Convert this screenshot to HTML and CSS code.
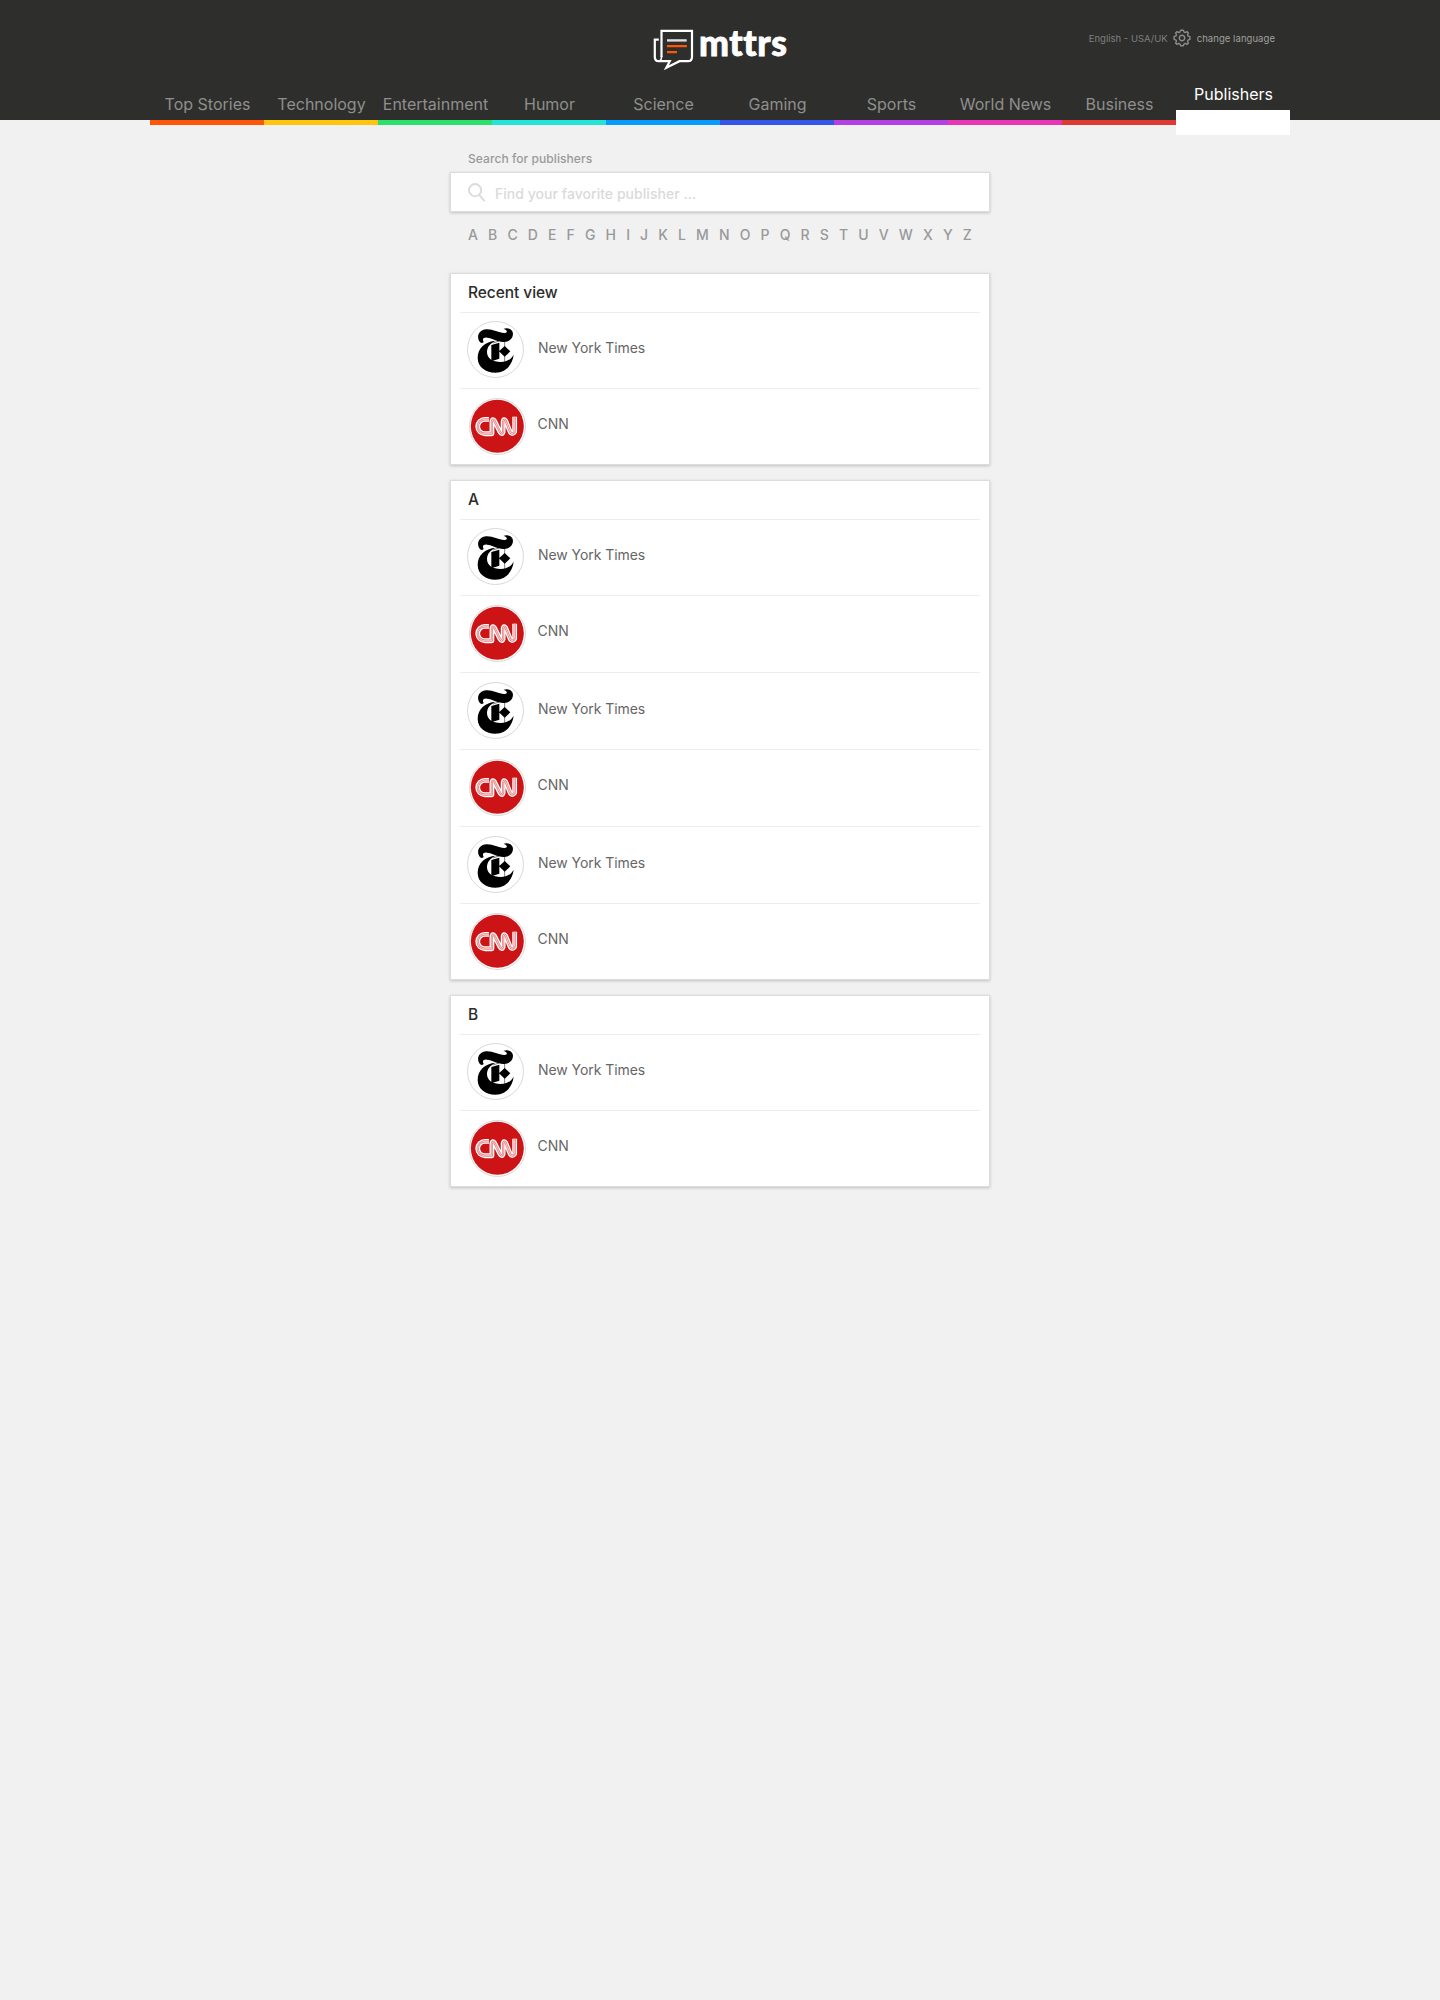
FILE: index.html
```html
<!DOCTYPE html>
<html lang="en">
<head>
<meta charset="utf-8">
<title>mttrs – Publishers</title>
<link rel="stylesheet" href="styles.css">
</head>
<body>
<svg width="0" height="0" class="defs" aria-hidden="true">
  <symbol id="nyt" viewBox="0 0 171 171">
    <circle cx="85.5" cy="85.5" r="84" fill="#fff" stroke="#d4d4d4" stroke-width="2.7"/>
    <path d="M37 61C27 44 38 26 58 25C79 24 96 37 113 36C125 34 119 25 109 24C121 19 138 23 138 39C137 55 124 64 109 63C90 62 76 51 60 50C49 49 45 54 50 63C45 68 41 66 37 61Z"/>
    <path d="M86 59C54 62 32 81 32 111C32 139 57 155 85 155C116 155 136 132 140 101C131 117 117 123 101 123C77 123 60 113 60 93C60 77 70 67 86 59Z"/>
    <path d="M73 72L97 65V113L73 121ZM113 75L130 91L113 107L96 91Z"/>
    <path d="M113 58V123M78 66L96 60" stroke="#000" stroke-width="1.5"/>
  </symbol>
  <symbol id="cnn" viewBox="0 0 171 171">
    <circle cx="85.5" cy="85.5" r="84" fill="#fff" stroke="#d4d4d4" stroke-width="2.7"/>
    <circle cx="85" cy="85" r="79.5" fill="#cc1417"/>
    <g fill="none" stroke-linejoin="round" transform="translate(4.5 4.5) scale(.96)">
      <path d="M58 62H45A22.500 22.500 0 0 0 45 107H67V68Q69 58 75 67L92 101Q98 112 102 101V68Q104 58 110 67L124 101Q130 112 138 101V54" stroke="#fff" stroke-width="15"/>
      <path d="M58 62H45A22.500 22.500 0 0 0 45 107H67V68Q69 58 75 67L92 101Q98 112 102 101V68Q104 58 110 67L124 101Q130 112 138 101V54" stroke="#e27476" stroke-width="7"/>
      <path d="M58 62H45A22.500 22.500 0 0 0 45 107H67V68Q69 58 75 67L92 101Q98 112 102 101V68Q104 58 110 67L124 101Q130 112 138 101V54" stroke="#fbe8e8" stroke-width="2.5"/>
    </g>
  </symbol>
</svg>

<header class="header">
  <div class="topbar">
    <svg class="logo" width="160" height="60" viewBox="0 0 160 60" role="img" aria-label="mttrs">
      <g fill="none" stroke="#fff" stroke-width="2.2">
        <path d="M21.5 37V10.8H52V37Q52 41.2 48 41.2H39.5L26.3 47.8L29.8 41.2H18.7Q14.8 41.2 14.8 37V19.7H18.8"/>
        <path d="M21.500 36V37.500Q21.500 40 19.500 41" stroke-width="1.600"/>
        <path d="M27 20.4H46.7" stroke="#ddd" stroke-width="2.4"/>
        <path d="M27 26.1H46.9M27 32.1H37" stroke="#ff5507" stroke-width="2.2"/>
      </g>
      <text class="logo-text" x="59" y="36.300" textLength="88" lengthAdjust="spacing">mttrs</text>
    </svg>
    <div class="language">
      <span class="language-current">English - USA/UK</span>
      <svg class="gear" width="18" height="18" viewBox="-9 -9 18 18" fill="none" stroke="#8d8d8b" stroke-width="1.4" stroke-linejoin="round">
        <circle r="2.7"/>
        <path d="M-1.3-7.8H1.3L2.1-5.9L3.2-5.4L5-6.4L6.4-5L5.5-3.2L6-2.1L7.9-1.3V1.3L6 2.1L5.5 3.2L6.4 5L5 6.4L3.2 5.4L2.1 5.9L1.3 7.8H-1.3L-2.1 5.9L-3.2 5.4L-5 6.4L-6.4 5L-5.5 3.2L-6 2.1L-7.9 1.3V-1.3L-6-2.1L-5.5-3.2L-6.4-5L-5-6.4L-3.2-5.4L-2.1-5.9Z"/>
      </svg>
      <a class="language-change">change language</a>
    </div>
  </div>
  <nav class="nav">
    <a class="tab orange">Top Stories</a>
    <a class="tab yellow">Technology</a>
    <a class="tab green">Entertainment</a>
    <a class="tab teal">Humor</a>
    <a class="tab sky">Science</a>
    <a class="tab blue">Gaming</a>
    <a class="tab purple">Sports</a>
    <a class="tab pink">World News</a>
    <a class="tab red">Business</a>
    <a class="tab active">Publishers</a>
  </nav>
</header>

<main class="main">
  <label class="search-label">Search for publishers</label>
  <div class="search">
    <svg width="17" height="19" viewBox="0 0 18 20" fill="none" stroke="#dadada" stroke-width="1.9" stroke-linecap="round"><circle cx="7.5" cy="7.5" r="6.5"/><path d="M12 12.6L17 18.6"/></svg>
    <span>Find your favorite publisher ...</span>
  </div>
  <div class="letters">
    <a>A</a><a>B</a><a>C</a><a>D</a><a>E</a><a>F</a><a>G</a><a>H</a><a>I</a><a>J</a><a>K</a><a>L</a><a>M</a><a>N</a><a>O</a><a>P</a><a>Q</a><a>R</a><a>S</a><a>T</a><a>U</a><a>V</a><a>W</a><a>X</a><a>Y</a><a>Z</a>
  </div>

  <section class="card">
    <h2>Recent view</h2>
    <div class="row"><svg class="badge"><use href="#nyt"/></svg><span>New York Times</span></div>
    <div class="row cnn"><svg class="badge"><use href="#cnn"/></svg><span>CNN</span></div>
  </section>

  <section class="card">
    <h2>A</h2>
    <div class="row"><svg class="badge"><use href="#nyt"/></svg><span>New York Times</span></div>
    <div class="row tall cnn"><svg class="badge"><use href="#cnn"/></svg><span>CNN</span></div>
    <div class="row tall low"><svg class="badge"><use href="#nyt"/></svg><span>New York Times</span></div>
    <div class="row tall cnn"><svg class="badge"><use href="#cnn"/></svg><span>CNN</span></div>
    <div class="row tall low"><svg class="badge"><use href="#nyt"/></svg><span>New York Times</span></div>
    <div class="row cnn"><svg class="badge"><use href="#cnn"/></svg><span>CNN</span></div>
  </section>

  <section class="card">
    <h2>B</h2>
    <div class="row"><svg class="badge"><use href="#nyt"/></svg><span>New York Times</span></div>
    <div class="row cnn"><svg class="badge"><use href="#cnn"/></svg><span>CNN</span></div>
  </section>
</main>
</body>
</html>
```
FILE: styles.css
```css
* { box-sizing: border-box; }

body {
  margin: 0;
  min-height: 2000px;
  background: #f1f1f1;
  font-family: Inter, "Liberation Sans", sans-serif;
  color: #666;
}

.defs { display: block; }

/* Header */
.header { height: 120px; background: #2e2e2c; }

.topbar {
  display: grid;
  grid-template-columns: 1fr 160px 1fr;
  height: 80px;
  padding-top: 20px;
}

.logo { display: block; grid-column: 2; }

.logo-text {
  font: 900 35.5px Lato, sans-serif;
  font-variant-ligatures: none;
  fill: #fff;
  stroke: #fff;
  stroke-width: 0.8px;
}

.language {
  display: flex;
  align-items: center;
  justify-content: flex-end;
  height: 36px;
  padding-right: 165px;
  font-size: 9.5px;
  white-space: nowrap;
  color: #8d8d8b;
}

.language-current { color: #80807e; }
.gear { margin: 0 6px 0 5px; }
.language-change { color: #a0a09e; letter-spacing: 0.06px; }

.nav {
  display: flex;
  width: 1140px;
  height: 45px;
  margin: 0 auto;
}

.tab {
  width: 114px;
  height: 45px;
  padding: 14px 0 0 1px;
  border-bottom: 5px solid;
  font-size: 16px;
  line-height: 20px;
  text-align: center;
  color: #8f8f8d;
}

.orange { border-bottom-color: #ff5507; }
.yellow { border-bottom-color: #fec50c; }
.green { border-bottom-color: #2be16b; }
.teal { border-bottom-color: #22e5d8; }
.sky { border-bottom-color: #089bff; }
.blue { border-bottom-color: #3557e8; }
.purple { border-bottom-color: #b33fe5; }
.pink { border-bottom-color: #e835b4; }
.red { border-bottom-color: #df3933; }

.tab.active {
  height: 55px;
  padding-top: 4px;
  border-bottom: 25px solid #fff;
  color: #fff;
}

/* Content */
.main { width: 540px; margin: 0 auto; }

.search-label {
  display: block;
  height: 52px;
  padding: 31px 18px 0;
  font-size: 12px;
  font-weight: 450;
  line-height: 16px;
  letter-spacing: 0.07px;
  color: #999;
}

.search {
  display: flex;
  align-items: center;
  gap: 10px;
  height: 40px;
  padding: 0 17px;
  border: 1px solid #dcdcdc;
  background: #fff;
  box-shadow: 0 1px 3px rgba(0, 0, 0, 0.2);
  font-size: 14px;
  font-weight: 500;
  letter-spacing: 0.04px;
  color: #dadada;
}

.search span { padding-top: 3px; }

.letters {
  display: flex;
  justify-content: space-between;
  height: 61px;
  padding: 13px 18px 0;
  font-size: 14px;
  font-weight: 450;
  line-height: 20px;
  color: #999;
}

.card {
  margin-bottom: 15px;
  padding: 0 9px;
  border: 1px solid #dcdcdc;
  background: #fff;
  box-shadow: 0 1px 3px rgba(0, 0, 0, 0.2);
}

.card h2 {
  height: 38px;
  margin: 0;
  padding: 9px 8px 0;
  font-size: 15.5px;
  font-weight: 480;
  line-height: 20px;
  letter-spacing: -0.06px;
  color: #2c2c2c;
}

.row {
  display: flex;
  align-items: flex-start;
  gap: 14px;
  height: 76px;
  padding: 8px 7px 0;
  border-top: 1px solid #ededed;
  font-size: 14px;
  line-height: 20px;
  letter-spacing: -0.06px;
}

.row span { padding-top: 17px; }
.tall { height: 77px; }
.low { padding-top: 9px; }
.cnn { gap: 11.5px; padding: 9px 9px 0; }
.cnn span { padding-top: 16px; }
.badge { flex: none; width: 57px; height: 57px; }
```
